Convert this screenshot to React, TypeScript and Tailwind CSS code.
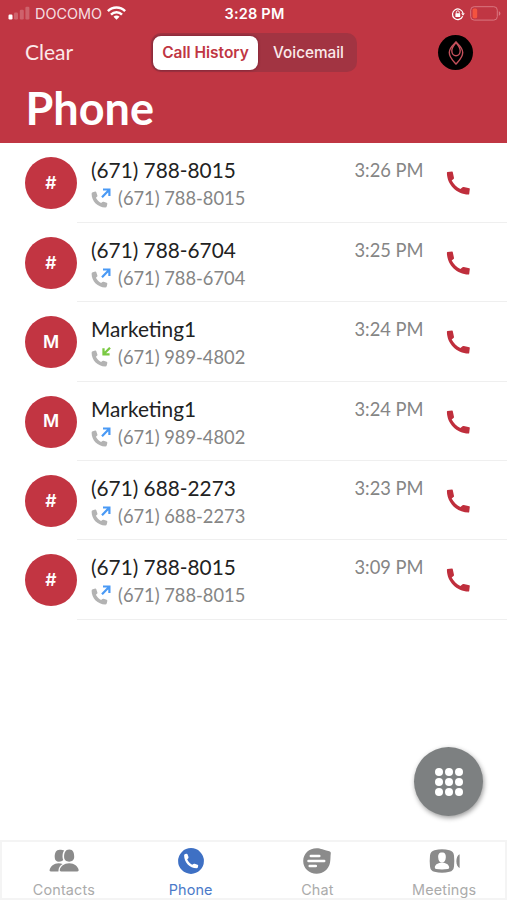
import { FC, ReactNode } from "react";

interface Call {
	name: string;
	phone: string;
	time: string;
	incoming?: boolean;
}

interface Tab {
	label: string;
	icon: ReactNode;
	active?: boolean;
}

const calls: Call[] = [
	{ name: "(671) 788-8015", phone: "(671) 788-8015", time: "3:26 PM" },
	{ name: "(671) 788-6704", phone: "(671) 788-6704", time: "3:25 PM" },
	{ name: "Marketing1", phone: "(671) 989-4802", time: "3:24 PM", incoming: true },
	{ name: "Marketing1", phone: "(671) 989-4802", time: "3:24 PM" },
	{ name: "(671) 688-2273", phone: "(671) 688-2273", time: "3:23 PM" },
	{ name: "(671) 788-8015", phone: "(671) 788-8015", time: "3:09 PM" },
];

const HANDSET =
	"M.9 1.7Q.9 1.1 1.5 1L6.1.6Q6.700.6 6.800 1.200L8 7Q8.100 7.700 7.500 8.100L5.700 9.600C7.600 13.200 10.800 16.300 14.400 18L16.500 16.300Q17.100 15.900 17.800 16L23.300 17.200Q23.900 17.300 23.800 18L23.200 22.900Q23.100 23.500 22.500 23.500C10.600 23.500.9 13.500.9 1.700Z";

// Status bar icons
const SignalIcon: FC = () => (
	<svg width="22" height="14" viewBox="0 0 22 14" fill="#fff">
		<rect x="0.5" y="8.5" width="4" height="5" rx="1.2" />
		<rect x="6" y="6.5" width="4" height="7" rx="1.2" opacity="0.22" />
		<rect x="11.8" y="3.8" width="4" height="9.7" rx="1.2" opacity="0.22" />
		<rect x="17.4" y="0.8" width="4" height="12.7" rx="1.2" opacity="0.22" />
	</svg>
);

const WifiIcon: FC = () => (
	<svg width="19" height="14" viewBox="0 0 19 14" fill="none" stroke="#fff" strokeWidth="2.5">
		<path d="M.9 5.100a12.200 12.200 0 0 1 17.200 0" />
		<path d="M4 8.600a7.800 7.800 0 0 1 11 0" />
		<path d="M9.500 13.800 6.500 10.800a4.200 4.200 0 0 1 6 0Z" fill="#fff" stroke="none" />
	</svg>
);

const RotationLockIcon: FC = () => (
	<svg width="14" height="14" viewBox="0 0 14 14" fill="none" stroke="#fff">
		<path d="M11.7 9.3A5.3 5.3 0 1 1 12 6.2" strokeWidth="1.2" />
		<path d="M10.2 6.2h3.6L12 8.8Z" fill="#fff" stroke="none" />
		<rect x="4.4" y="6.3" width="4.8" height="3.7" rx="0.6" fill="#fff" stroke="none" />
		<path d="M5.3 6.6V5.3a1.5 1.5 0 0 1 3 0v1.3" strokeWidth="0.9" />
	</svg>
);

const BatteryIcon: FC = () => (
	<svg width="31" height="15" viewBox="0 0 31 15">
		<rect x="0.7" y="0.7" width="26.6" height="13.4" rx="3.5" fill="none" stroke="#d97780" />
		<rect x="2.6" y="2.5" width="4.6" height="9.8" rx="1.6" fill="#f4533f" />
		<path d="M28.800 5.200q1.600.5 1.600 2.300t-1.600 2.300Z" fill="#d97780" />
	</svg>
);

const LogoIcon: FC = () => (
	<svg width="18" height="26" viewBox="0 0 18 26" fill="none" stroke="#c4505b" strokeWidth="1.4">
		<path d="M9 2C7 4.200 2.300 7.500 2.300 12.500C2.300 17.500 5.800 20.500 9 24C12.200 20.500 15.700 17.500 15.700 12.500C15.700 7.500 11 4.200 9 2Z" />
		<path d="M9 2.500C7 5 4.800 7.500 4.800 10.800C4.800 13.600 6.600 15.700 9 15.700S13.200 13.600 13.200 10.800C13.200 7.500 11 5 9 2.500Z" />
	</svg>
);

const CallDirectionIcon: FC<{ incoming?: boolean }> = ({ incoming }) => (
	<svg width="20" height="20" viewBox="0 0 20 20" fill="none">
		<path
			d="M.6 5.700Q.6 4.500 1.800 4.200L4.200 3.600Q5 3.500 5.300 4.200L6.400 7.400Q6.600 8.200 6 8.700L4.900 9.800C6 12 7.800 13.900 10.100 15L11.300 14Q11.900 13.500 12.600 13.700L15.700 14.800Q16.500 15.100 16.300 16L15.800 18.200Q15.500 19.400 14.200 19.400C6.800 19.400.6 13.200.6 5.700Z"
			fill="#b3b3b3"
		/>
		{incoming ? (
			<path d="M19 0.800 13 6.800M12.500 1.300V7.300H18.600" stroke="#7ac943" strokeWidth="2.300" />
		) : (
			<path d="M11 9.200 18 1.900M12 1.500H18.400V8" stroke="#4a9af5" strokeWidth="2.200" />
		)}
	</svg>
);

// Tab bar icons
const ContactsIcon: FC = () => (
	<svg width="30" height="26" viewBox="0 0 30 26" fill="#8b8b8b">
		<path d="M10.700 1.800C7 1.800 5.700 5 5.700 9c0 3.300 1.700 4.700 4.200 4.700 1.800 0 3.300-.5 4.300-1.600-.5-1.200-.7-2.400-.7-3.600 0-2.500.5-4.600 1.700-6-1-.5-2.700-.7-4.500-.7Z" />
		<path d="M20.300 1.500c-4 0-5.200 3.400-5.200 7.300 0 3.400 2.200 4.900 5 4.900s5.100-1.500 5.100-4.900c0-3.900-1-7.300-4.900-7.300Z" />
		<path d="M9.700 15.200c1.400 0 2.700.3 3.900.8-2.700 1.500-4.200 4-4.200 7.400H1.900c-1.100 0-1.500-.5-1.300-1.400.8-3.800 4.300-6.800 9.100-6.800Z" />
		<path d="M20.200 15.200c5.200 0 8.800 3.300 9.400 6.500.2 1.200-.3 1.700-1.300 1.700H12.200c-1.100 0-1.600-.5-1.400-1.700.6-3.200 4.200-6.500 9.400-6.500Z" />
	</svg>
);

const PhoneIcon: FC = () => (
	<svg width="26" height="26" viewBox="0 0 26 26">
		<circle cx="13" cy="13" r="12.900" fill="#3e70c4" />
		<path
			d="M6.100 7.200Q6.100 6.100 7.200 5.900L8.500 5.700Q9.300 5.600 9.600 6.400L10.500 9Q10.700 9.800 10.100 10.400L9.200 11.300C10.200 13.600 12 15.600 14.200 16.700L15.300 15.900Q15.900 15.500 16.600 15.700L19.600 16.700Q20.400 17 20.200 17.800L19.900 19.200Q19.700 20.300 18.600 20.300C11.600 20.300 6.100 14.200 6.100 7.200Z"
			fill="#fff"
		/>
	</svg>
);

const ChatIcon: FC = () => (
	<svg width="28" height="26" viewBox="0 0 28 26">
		<path
			d="M13.600.3C18 .3 20.500 2.200 26.300 3.200Q28 3.500 27.800 5.100C27.300 9 27.700 11 27 14.700 25.600 21.500 20.200 25.700 13.600 25.700 6 25.700.2 20.300.2 13S6.200.3 13.600.3Z"
			fill="#8b8b8b"
		/>
		<path d="M7.800 8.100H16.300M5.500 13H21.200M6.700 17.900H12.800" stroke="#fff" strokeWidth="2.500" strokeLinecap="round" />
	</svg>
);

const MeetingsIcon: FC = () => (
	<svg width="31" height="26" viewBox="0 0 31 26">
		<path
			d="M5.500 2.200Q13 .3 20.500 2.200Q24.500 3.100 25 7.500Q25.600 13 25 18.500Q24.500 23 20.500 23.800Q13 25.700 5.500 23.800Q1.500 23 1 18.500Q.4 13 1 7.500Q1.500 3.100 5.500 2.200Z"
			fill="#8b8b8b"
		/>
		<path d="M13 4.500c-3.200 0-4 2.100-3.800 5.100.2 3.200 1.500 5.200 3.800 5.200s3.600-2 3.800-5.200c.2-3-.6-5.100-3.800-5.100Z" fill="#fff" />
		<path d="M13 14.700c4 0 6.800 1.700 7.200 4.600q.2 1.700-1.400 1.800Q13 21.900 7.200 21.100q-1.600-.1-1.400-1.800c.4-2.900 3.200-4.600 7.200-4.600Z" fill="#fff" />
		<path d="M30.600 6.200V19.900C26.400 18.300 26.200 8 30.600 6.200Z" fill="#8b8b8b" />
	</svg>
);

const tabs: Tab[] = [
	{ label: "Contacts", icon: <ContactsIcon /> },
	{ label: "Phone", icon: <PhoneIcon />, active: true },
	{ label: "Chat", icon: <ChatIcon /> },
	{ label: "Meetings", icon: <MeetingsIcon /> },
];

// Single call history entry
const CallRow: FC<{ call: Call }> = ({ call }) => (
	<li className="flex h-[79.4px] pl-[25px]">
		<div className="mt-[14px] flex size-[52px] shrink-0 items-center justify-center rounded-full bg-[#c23542] font-['Inter',sans-serif] text-[17.5px] font-semibold text-white">
			{call.name.startsWith("(") ? "#" : call.name[0]}
		</div>
		<div className="flex flex-1 border-b border-[#efefef] pl-[14px]">
			<div className="flex-1 pt-[13px]">
				<p className="whitespace-nowrap text-[20.8px] leading-[28px] text-[#222]">{call.name}</p>
				<div className="flex items-center gap-[7px]">
					<CallDirectionIcon incoming={call.incoming} />
					<span className="whitespace-nowrap text-[18.3px] leading-[28px] text-[#858585]">{call.phone}</span>
				</div>
			</div>
			<span className="pt-[13px] text-[18.3px] leading-[28px] text-[#858585]">{call.time}</span>
			<svg className="ml-[22px] mr-[36.5px] mt-[28px]" width="25" height="25" viewBox="0 0 25 25">
				<path d={HANDSET} fill="#bf2e3c" />
			</svg>
		</div>
	</li>
);

export const App: FC = () => {
	return (
		<div className="relative flex h-[900px] w-[507px] flex-col overflow-hidden bg-white font-['Lato',sans-serif]">
			<header className="h-[143.4px] shrink-0 bg-[#c03643] text-white">
				<div className="grid h-[27px] grid-cols-3 items-center pl-[8px] pr-[6px] font-['Inter',sans-serif] text-[14px]">
					<div className="flex items-center gap-[5px]">
						<SignalIcon />
						<span className="text-[14.4px] text-[#f6dfe1]">DOCOMO</span>
						<WifiIcon />
					</div>
					<span className="whitespace-nowrap text-center text-[14.5px] font-semibold tracking-[0.2px]">3:28 PM</span>
					<div className="flex items-center justify-end gap-[5px]">
						<RotationLockIcon />
						<BatteryIcon />
					</div>
				</div>
				<div className="flex h-[51px] items-center pl-[25px] pr-[34px]">
					<span className="w-[126px] pb-[2px] text-[21px] text-[#fbe9ea]">Clear</span>
					<div className="flex h-[39px] w-[206px] items-center rounded-[10px] bg-[#a23442] p-[2px] font-['Inter',sans-serif] text-[15.3px] font-medium">
						<div className="flex h-[34px] w-[105px] shrink-0 items-center justify-center whitespace-nowrap rounded-[8px] bg-white pt-[1px] text-[15.5px] font-semibold text-[#c03643] shadow-[0_0_3px_rgba(60,10,30,0.5)]">
							Call History
						</div>
						<div className="flex-1 pl-[4px] pt-[1px] text-center text-[#fbe9ea]">Voicemail</div>
					</div>
					<div className="ml-auto flex size-[35px] items-center justify-center rounded-full bg-black">
						<LogoIcon />
					</div>
				</div>
				<h1 className="pl-[25.5px] pt-[1px] text-[45px] font-bold leading-[58px]">Phone</h1>
			</header>

			<ul className="flex-1">
				{calls.map((call, index) => (
					<CallRow key={`${call.phone}_${index}`} call={call} />
				))}
			</ul>

			{/* Dialpad button */}
			<button className="absolute left-[414px] top-[747px] flex size-[69px] items-center justify-center rounded-full bg-[#7d8081] shadow-[1px_2px_5px_rgba(0,0,0,0.4)]">
				<span className="grid grid-cols-3 gap-[2px]">
					{Array.from({ length: 9 }, (_, i) => (
						<span key={i} className="size-[8px] rounded-full bg-white" />
					))}
				</span>
			</button>

			<nav className="grid h-[60px] grid-cols-4 bg-white font-['Inter',sans-serif] text-[14.4px] shadow-[inset_0_0_0_2px_#f4f4f4]">
				{tabs.map((tab) => (
					<div
						key={tab.label}
						className={`flex flex-col items-center pl-[1px] pt-[8px] ${tab.active ? "text-[#4b7ac9]" : "text-[#ababab]"}`}
					>
						{tab.icon}
						<span className="mt-[7px] leading-[18px] tracking-[0.15px]">{tab.label}</span>
					</div>
				))}
			</nav>
		</div>
	);
};

export default App;
